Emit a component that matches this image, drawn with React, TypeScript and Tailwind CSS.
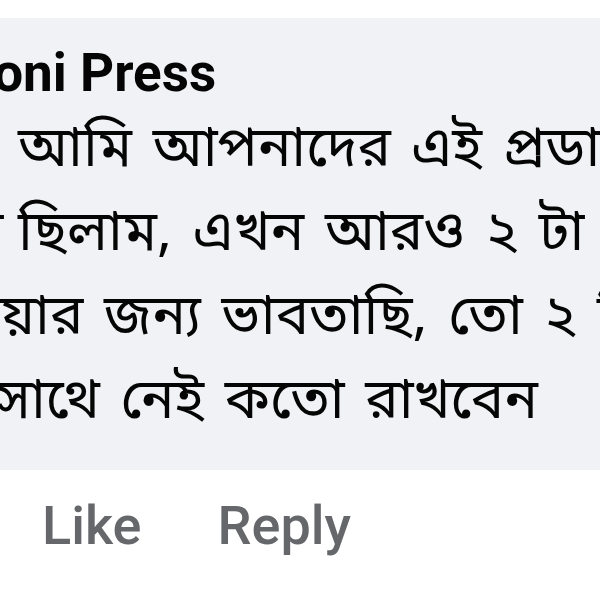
import React from 'react';

const lines: { pre: string; text: string; x: number }[] = [
  { pre: 'আসসালামু আলাইকুম,', text: 'আমি আপনাদের এই প্রডাক্ট', x: 18 },
  { pre: 'প্রডাক্ট নিতা', text: 'ছিলাম, এখন আরও ২ টা', x: 18 },
  { pre: 'নেও', text: 'য়ার জন্য ভাবতাছি, তো ২ টির', x: 0 },
  { pre: 'এক', text: 'সাথে নেই কতো রাখবেন', x: -4 },
];

const bn = "font-['Noto_Sans_Bengali','Noto_Sans','Liberation_Sans',sans-serif]";

export default function App() {
  return (
    <div className="w-[600px] h-[600px] overflow-hidden bg-white">
      <div className="mt-[18px] h-[452px] w-[640px] bg-[#f0f2f5] rounded-r-[36px] pt-[24px]">
        <div className="flex whitespace-nowrap font-['Roboto',sans-serif] font-bold text-[53px] leading-[62px] text-[#050505]">
          <span className="w-[80px] flex justify-end">Soni&nbsp;</span>
          <span>Press</span>
        </div>
        <div className={`${bn} mt-[6px] text-[56px] leading-[84px] [word-spacing:6px] text-[#050505]`}>
          {lines.map((l, i) => (
            <div key={i} className="flex whitespace-nowrap">
              <span className="flex justify-end shrink-0" style={{ width: Math.max(l.x, 0) }}>
                <span className="[word-spacing:0px]">{l.pre}&nbsp;</span>
              </span>
              <span style={{ marginLeft: Math.min(l.x, 0) }}>{l.text}</span>
            </div>
          ))}
        </div>
      </div>
      <div className="flex gap-[76px] pl-[42px] pt-[24px] font-['Roboto',sans-serif] font-medium text-[54px] leading-[64px] text-[#65676b]">
        <span>Like</span>
        <span>Reply</span>
      </div>
    </div>
  );
}
